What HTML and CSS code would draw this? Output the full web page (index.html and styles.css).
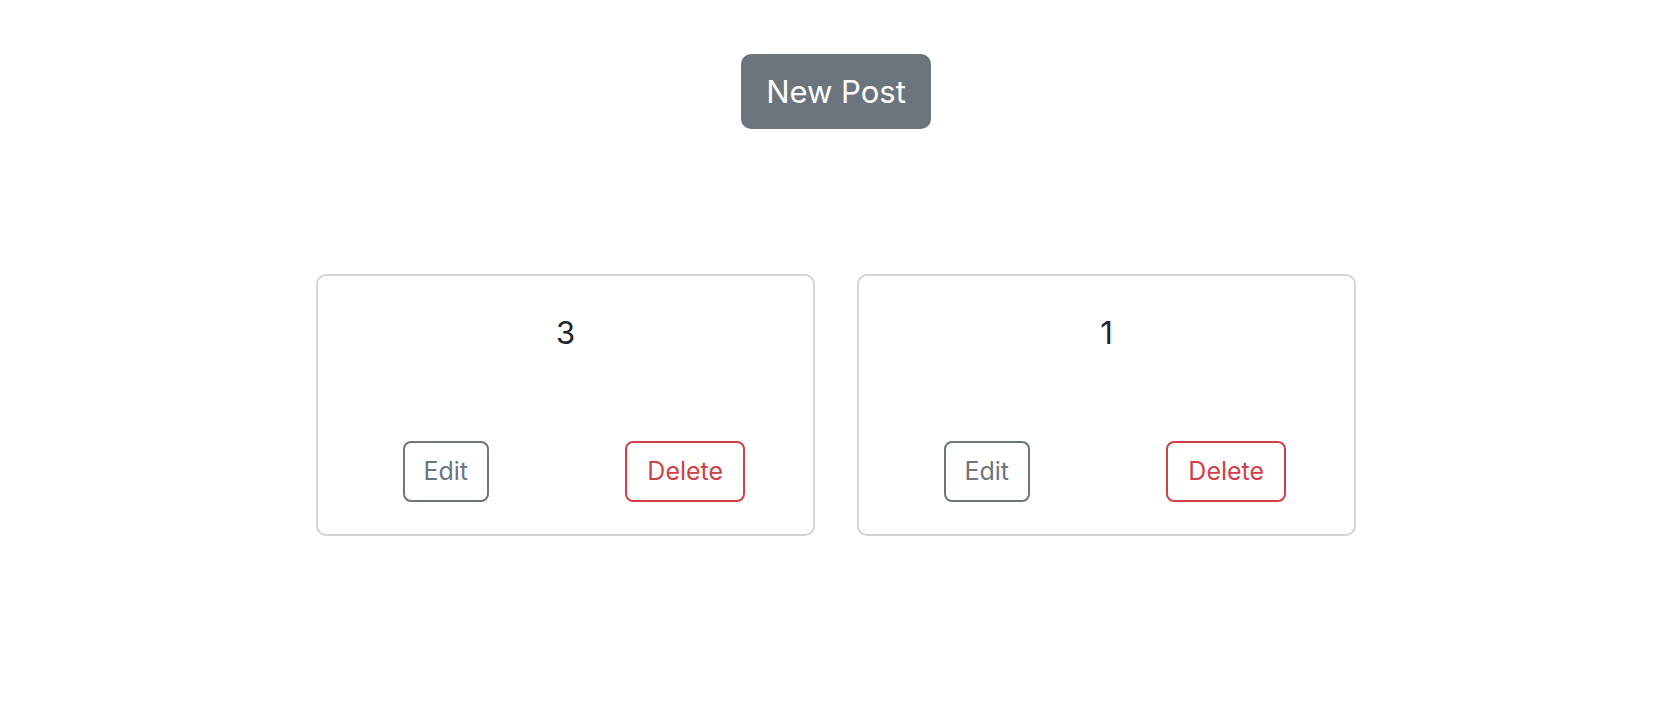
FILE: index.html
```html
<!DOCTYPE html>
<html lang="en">
<head>
<meta charset="utf-8">
<title>Posts</title>
<link rel="stylesheet" href="styles.css">
</head>
<body>
<main class="page">
  <div class="toolbar">
    <button class="btn btn-lg btn-secondary">New Post</button>
  </div>
  <section class="posts">
    <article class="card">
      <h5 class="card-title">3</h5>
      <div class="card-actions">
        <div class="action-col"><button class="btn btn-outline-secondary">Edit</button></div>
        <div class="action-col"><button class="btn btn-outline-danger">Delete</button></div>
      </div>
    </article>
    <article class="card">
      <h5 class="card-title">1</h5>
      <div class="card-actions">
        <div class="action-col"><button class="btn btn-outline-secondary">Edit</button></div>
        <div class="action-col"><button class="btn btn-outline-danger">Delete</button></div>
      </div>
    </article>
  </section>
</main>
</body>
</html>
```

FILE: styles.css
```css
* { box-sizing: border-box; }

html, body {
  margin: 0;
  background: #ffffff;
}

body {
  font-family: Inter, "Noto Sans", "Liberation Sans", sans-serif;
  color: #212529;
}

.page {
  padding: 54px 6px 0 0;
}

.toolbar {
  display: flex;
  justify-content: center;
}

.btn {
  font-family: inherit;
  font-weight: 400;
  background: transparent;
  border: 2px solid transparent;
  border-radius: 8px;
  cursor: pointer;
  font-size: 25px;
  line-height: 37px;
  padding: 10px 19px;
}

.btn-lg {
  font-size: 31px;
  line-height: 46px;
  padding: 12.5px 23.5px;
  border-radius: 10px;
}

.btn-secondary {
  background: #6c757d;
  border-color: #6c757d;
  color: #ffffff;
}

.btn-outline-secondary {
  color: #6c757d;
  border-color: #6c757d;
  padding-left: 18.5px;
  padding-right: 18.5px;
}

.btn-outline-danger {
  color: #d13f48;
  border-color: #d13f48;
  padding-left: 20px;
  padding-right: 20px;
}

.posts {
  display: flex;
  justify-content: center;
  gap: 42px;
  margin-top: 145px;
}

.card {
  width: 499px;
  border: 2px solid #d4d4d4;
  border-radius: 10px;
  padding: 38px 8px 32px;
  display: flex;
  flex-direction: column;
}

.card-title {
  margin: 0 0 89px;
  text-align: center;
  font-size: 31px;
  line-height: 37.5px;
  font-weight: 400;
}

.card-actions {
  display: grid;
  grid-template-columns: 1fr 1fr;
}

.action-col {
  display: flex;
  justify-content: center;
}
```
